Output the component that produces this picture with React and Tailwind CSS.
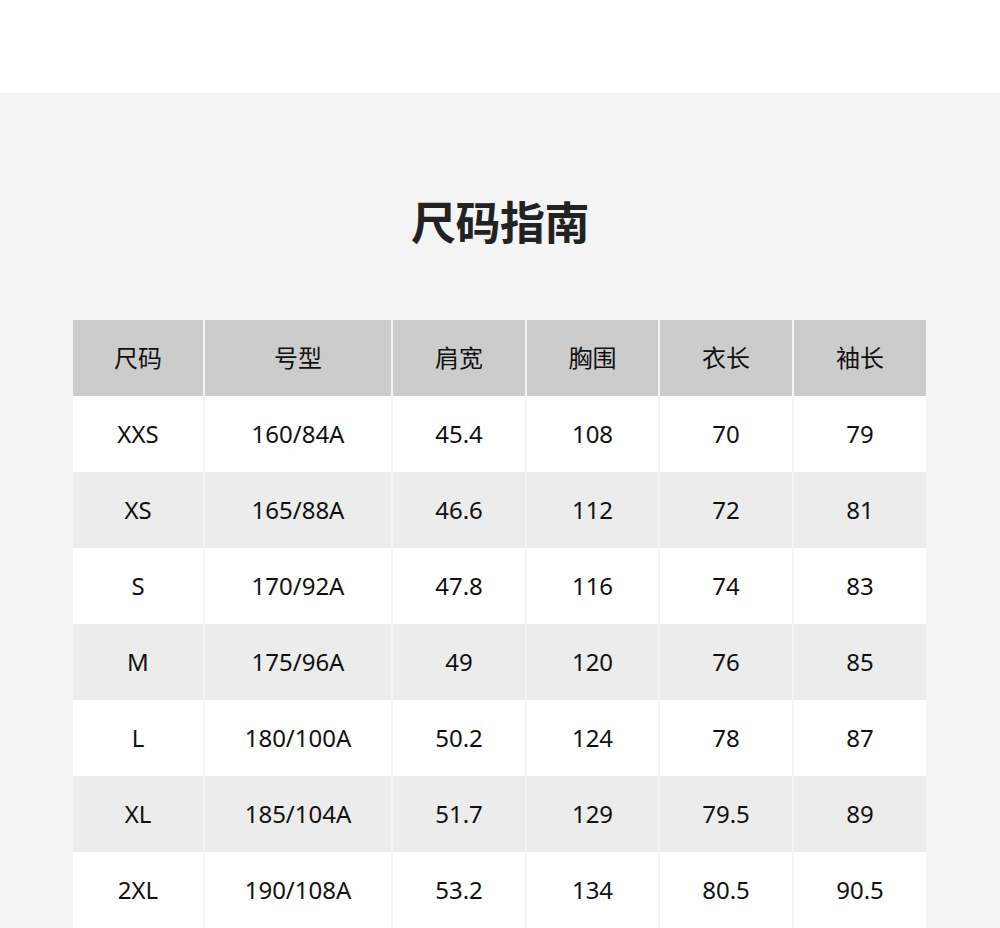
import React from 'react';

const headers = ['尺码', '号型', '肩宽', '胸围', '衣长', '袖长'];

const rows = [
  ['XXS', '160/84A', '45.4', '108', '70', '79'],
  ['XS', '165/88A', '46.6', '112', '72', '81'],
  ['S', '170/92A', '47.8', '116', '74', '83'],
  ['M', '175/96A', '49', '120', '76', '85'],
  ['L', '180/100A', '50.2', '124', '78', '87'],
  ['XL', '185/104A', '51.7', '129', '79.5', '89'],
  ['2XL', '190/108A', '53.2', '134', '80.5', '90.5'],
];

const cols = 'grid grid-cols-[130px_186px_132px_131px_132px_132px] gap-x-[2px]';

export default function App() {
  return (
    <div className="w-[1000px] h-[928px] overflow-hidden bg-white font-['Noto_Sans','Noto_Sans_CJK_SC',sans-serif]">
      <div className="h-[93px] bg-white" />
      <div className="bg-[#f4f4f4] h-[835px] pl-[73px]">
        {/* Title */}
        <h1 className="h-[227px] pt-[100px] pl-[338px] text-[45px] leading-[56px] font-bold text-[#222] tracking-[-0.5px] font-['Noto_Sans_CJK_SC',sans-serif]">
          尺码指南
        </h1>

        {/* Table */}
        <div className="w-[853px]">
          <div className={cols}>
            {headers.map((h) => (
              <div key={h} className="h-[76px] pb-[3px] bg-[#cccccc] flex items-center justify-center text-[24px] text-[#111] font-['Noto_Sans_CJK_SC',sans-serif]">
                {h}
              </div>
            ))}
          </div>
          {rows.map((r, i) => (
            <div key={r[0]} className={cols}>
              {r.map((c, j) => (
                <div
                  key={j}
                  className={`h-[76px] flex items-center justify-center text-[24px] text-[#111] ${i % 2 === 0 ? 'bg-white' : 'bg-[#ececec]'}`}
                >
                  {c}
                </div>
              ))}
            </div>
          ))}
        </div>
      </div>
    </div>
  );
}
